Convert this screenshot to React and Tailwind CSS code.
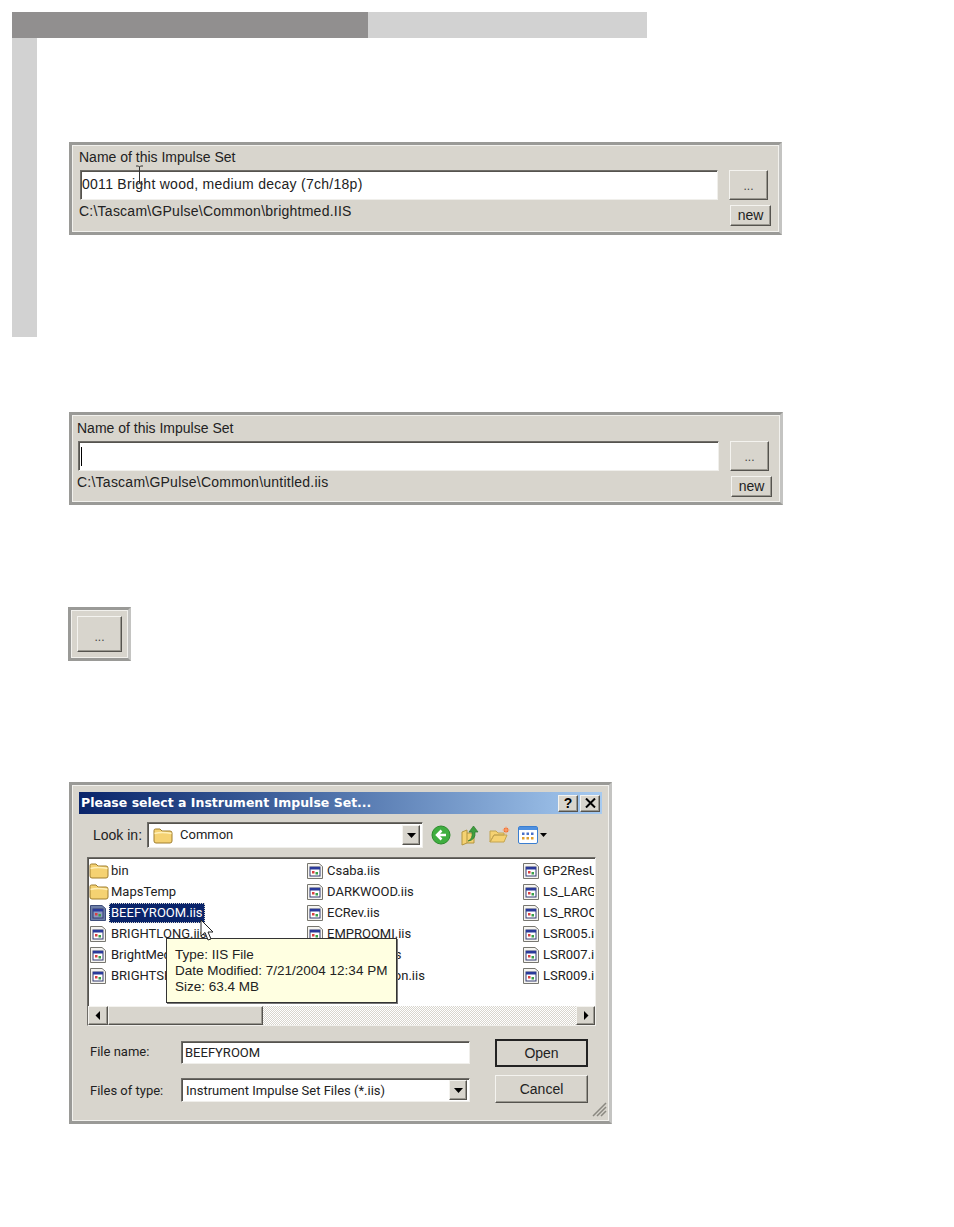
import React from 'react';

const tahoma = "font-['Liberation_Sans',sans-serif]";
const listFont = "font-['Roboto',sans-serif] text-[13px]";
const raised = "border border-t-[#f4f3ef] border-l-[#f4f3ef] border-r-[#55534e] border-b-[#55534e] shadow-[inset_-1px_-1px_0_#9a9890]";
const sunken = "border border-t-[#6f6d68] border-l-[#6f6d68] border-r-[#f0efeb] border-b-[#f0efeb] shadow-[inset_1px_1px_0_#55534e]";

// 3px picture-frame bevel round each captured control
const Frame = ({ className = '', children }) => (
  <div className={`border-[3px] border-t-[#9a9a97] border-l-[#9a9a97] border-r-[#c4c4c2] border-b-[#9a9a97] ${className}`}>
    <div className="border border-[#f2f1ed] bg-[#d8d5cd] h-full">{children}</div>
  </div>
);

const Folder = () => (
  <svg width="20" height="17" viewBox="0 0 20 17" className="shrink-0">
    <path d="M1 3.5 Q1 2 2.5 2 H7 L9 4 H17 Q19 4 19 6 V14 Q19 16 17 16 H3 Q1 16 1 14 Z" fill="#f5d272" stroke="#a07f2e" />
    <path d="M1.5 6.5 Q9 4.5 18.5 6.5" fill="none" stroke="#fff0b8" strokeWidth="1.5" />
  </svg>
);

const FileIcon = ({ selected }) => (
  <svg width="18" height="18" viewBox="0 0 18 18" className="shrink-0">
    <path d="M1.5 1.5 H13 L16.5 4.5 V16.5 H1.5 Z" fill={selected ? '#6d7fa8' : '#f5f4f0'} stroke={selected ? '#3c4c78' : '#77766f'} />
    <rect x="4" y="5" width="10" height="9" fill={selected ? '#8d9ac0' : '#fff'} stroke="#333a70" />
    <rect x="4" y="5" width="10" height="2.5" fill="#2a3a9a" />
    <rect x="6" y="9" width="2.5" height="2.5" fill="#d94040" />
    <rect x="9.5" y="10" width="2.5" height="2.5" fill="#38a048" />
  </svg>
);

const Arrow = ({ dir }) => (
  <svg width="6" height="9" viewBox="0 0 6 9">
    <path d={dir === 'left' ? 'M5 0 V9 L0.5 4.5 Z' : 'M1 0 V9 L5.5 4.5 Z'} fill="#000" />
  </svg>
);

const DownArrow = () => (
  <svg width="9" height="5" viewBox="0 0 9 5"><path d="M0 0 H9 L4.5 5 Z" fill="#000" /></svg>
);

const ImpulsePanel = ({ path, value, caret, header, inputLeft, textLeft, width, cursor }) => (
  <Frame className={`relative ${width} h-[93px]`}>
    <div className={`flex flex-col h-full ${tahoma} text-[14px] text-[#222] leading-none`}>
      <div className={`${header} ${textLeft}`}>Name of this Impulse Set</div>
      <div className={`flex ${inputLeft} pr-[10px]`}>
        <div className={`flex-1 h-[30px] bg-white ${sunken} flex items-center pl-[1px] pb-[3px] tracking-[0.27px] text-[#222]`}>
          {caret && <div className="w-px h-[19px] bg-black ml-[1px] mt-[3px]" />}
          {value}
        </div>
        <div className={`w-[39px] h-[30px] ml-[11px] ${raised} bg-[#d8d5cd] flex items-center justify-center text-[12px] text-[#444] pt-[2px]`}>...</div>
      </div>
      <div className={`flex items-start justify-between ${textLeft} pr-[7px] mt-[5px]`}>
        <span className="-mt-[1px] tracking-[0.24px]">{path}</span>
        <div className={`w-[41px] h-[21px] ${raised} bg-[#d8d5cd] flex items-center justify-center pb-[1px]`}>new</div>
      </div>
    </div>
    {cursor && (
      <svg width="9" height="20" viewBox="0 0 9 20" className="absolute left-[63px] top-[20px]">
        <path d="M1 1 H3.5 L4.5 2 L5.5 1 H8 M4.5 2 V18 M1 19 H3.5 L4.5 18 L5.5 19 H8" fill="none" stroke="#333" />
      </svg>
    )}
  </Frame>
);

const FileRow = ({ name, type, selected, gap }) => (
  <div className="flex items-center h-[21px] whitespace-nowrap">
    {type === 'folder' ? <Folder /> : <FileIcon selected={selected} />}
    <span className={selected
      ? 'ml-[2px] px-[2px] h-[20px] flex items-center bg-[#0a246a] text-white outline-1 outline-dotted outline-[#d8d5cd] -outline-offset-1'
      : type === 'folder' ? 'ml-[2px]' : gap}>{name}</span>
  </div>
);

const columns = [
  { w: 'w-[217px]', gap: 'ml-[4px]', items: [['bin', 'folder'], ['MapsTemp', 'folder'], ['BEEFYROOM.iis', 'file', true], ['BRIGHTLONG.iis', 'file'], ['BrightMedium.iis', 'file'], ['BRIGHTSHORT.iis', 'file']] },
  { w: 'w-[216px]', gap: 'ml-[3px]', items: [['Csaba.iis', 'file'], ['DARKWOOD.iis', 'file'], ['ECRev.iis', 'file'], ['EMPROOMI.iis', 'file'], ['EMPTYR1.iis', 'file'], ['GreatMansion.iis', 'file']] },
  { w: 'w-[72px]', gap: 'ml-[3px]', items: [['GP2ResUser.iis', 'file'], ['LS_LARGE.iis', 'file'], ['LS_RROOM.iis', 'file'], ['LSR005.iis', 'file'], ['LSR007.iis', 'file'], ['LSR009.iis', 'file']] },
];

const Dialog = () => (
  <div className="relative w-[543px] h-[342px] border-[3px] border-t-[#9a9a97] border-l-[#9a9a97] border-r-[#c4c4c2] border-b-[#9a9a97] bg-[#d8d5cd]">
    <div className={`h-full p-[6px] ${tahoma} text-[14px] text-[#222] leading-none border border-[#f2f1ed]`}>
      {/* title bar */}
      <div className="h-[22px] flex items-center justify-between pl-[2px] pr-[2px] bg-gradient-to-r from-[#0a246a] to-[#a6caf0]">
        <span className="font-['DejaVu_Sans',sans-serif] font-bold text-[12.5px] text-white">Please select a Instrument Impulse Set...</span>
        <div className="flex gap-[2px]">
          <div className={`w-[20px] h-[17px] ${raised} bg-[#d8d5cd] flex items-center justify-center text-black font-bold text-[14px]`}>?</div>
          <div className={`w-[20px] h-[17px] ${raised} bg-[#d8d5cd] flex items-center justify-center`}>
            <svg width="11" height="10" viewBox="0 0 11 10"><path d="M1 0.5 L10 9.5 M10 0.5 L1 9.5" stroke="#000" strokeWidth="2" /></svg>
          </div>
        </div>
      </div>
      {/* look in row */}
      <div className="flex items-center h-[26px] mt-[8px] pl-[14px]">
        <span className="w-[54px]">Look in:</span>
        <div className={`w-[276px] h-[26px] bg-white ${sunken} flex items-center pl-[5px] pr-[2px]`}>
          <Folder />
          <span className={`ml-[7px] flex-1 pb-[2px] ${listFont}`}>Common</span>
          <div className={`w-[18px] h-[20px] ${raised} bg-[#d8d5cd] flex items-center justify-center`}><DownArrow /></div>
        </div>
        <svg width="20" height="20" viewBox="0 0 20 20" className="ml-[8px]">
          <circle cx="10" cy="10" r="9" fill="#3fae3f" stroke="#2b8a2b" />
          <path d="M15 10 H7 M10.5 5.5 L6 10 L10.5 14.5" fill="none" stroke="#fff" strokeWidth="2.5" />
        </svg>
        <svg width="20" height="21" viewBox="0 0 20 21" className="ml-[9px]">
          <path d="M2 7 L7 5 V18 L2 20 Z M7 8 H14 V18 H7" fill="#f5d272" stroke="#b3953f" />
          <path d="M8 16 Q13 14 12 7 H9 L13.5 1 L18 7 H15 Q16 15 8 16 Z" fill="#3f9e3f" stroke="#2b7a2b" strokeWidth="0.7" />
        </svg>
        <svg width="22" height="18" viewBox="0 0 22 18" className="ml-[9px]">
          <path d="M1 5 H7 L9 7 H15 V9 H5 L1 16 Z M5 9 H18 L15 16 H1 Z" fill="#f5d272" stroke="#c4a550" />
          <circle cx="17" cy="4" r="2.5" fill="#f26a2a" />
          <path d="M17 0 V8 M13 4 H21" stroke="#f9b58a" strokeWidth="0.8" />
        </svg>
        <svg width="20" height="18" viewBox="0 0 20 18" className="ml-[7px]">
          <rect x="0.5" y="0.5" width="19" height="17" rx="1.5" fill="#fff" stroke="#3a7ed0" />
          <rect x="1" y="1" width="18" height="3" fill="#4e90e0" />
          {[4, 8.5, 13].map((x) => [6.5, 11].map((y) => (
            <rect key={`${x}-${y}`} x={x} y={y} width="2.5" height="2.5" fill={y === 6.5 ? '#4a70c8' : '#e0a030'} />
          )))}
        </svg>
        <svg width="7" height="4" viewBox="0 0 7 4" className="ml-[2px]"><path d="M0 0 H7 L3.5 4 Z" fill="#000" /></svg>
      </div>
      {/* file list */}
      <div className={`relative w-[509px] h-[169px] mt-[9px] ml-[8px] bg-white ${sunken} flex flex-col ${listFont}`}>
        <div className="flex flex-1 pl-[1px] pt-[2px] overflow-hidden">
          {columns.map((col) => (
            <div key={col.w} className={`${col.w} overflow-hidden shrink-0`}>
              {col.items.map(([name, type, selected]) => (
                <FileRow key={name} name={name} type={type} selected={selected} gap={col.gap} />
              ))}
            </div>
          ))}
        </div>
        {/* scrollbar */}
        <div className="flex h-[19px] bg-[repeating-conic-gradient(#d8d5cd_0_25%,#fff_0_50%)] bg-[length:2px_2px]">
          <div className={`w-[20px] ${raised} bg-[#d8d5cd] flex items-center justify-center`}><Arrow dir="left" /></div>
          <div className={`w-[155px] ${raised} bg-[#d8d5cd]`} />
          <div className="flex-1" />
          <div className={`w-[19px] ${raised} bg-[#d8d5cd] flex items-center justify-center`}><Arrow dir="right" /></div>
        </div>
        {/* tooltip */}
        <div className="absolute left-[78px] top-[80px] w-[231px] h-[65px] bg-[#ffffe1] border border-[#333] pl-[8px] pt-[9px] flex flex-col gap-[2px] shadow-[1px_1px_0_#777] font-['Liberation_Sans',sans-serif] text-[13.5px]">
          <div className="h-[14px]">Type: IIS File</div>
          <div className="h-[14px]">Date Modified: 7/21/2004 12:34 PM</div>
          <div className="h-[14px]">Size: 63.4 MB</div>
        </div>
        {/* mouse pointer */}
        <svg width="16" height="23" viewBox="0 0 16 23" className="absolute left-[112px] top-[61px]">
          <path d="M1 1 V17 L5 13.5 L8 21 L11 20 L8 13 H13 Z" fill="#fff" stroke="#222" />
        </svg>
      </div>
      {/* bottom form */}
      <div className="flex mt-[13px] pl-[11px]">
        <div className={`w-[91px] flex flex-col ${listFont}`}>
          <div className="h-[24px] flex items-center">File name:</div>
          <div className="h-[24px] flex items-center mt-[15px]">Files of type:</div>
        </div>
        <div className={`w-[289px] flex flex-col pt-[2px] ${listFont}`}>
          <div className={`h-[23px] bg-white ${sunken} flex items-center pl-[3px]`}>BEEFYROOM</div>
          <div className={`h-[24px] mt-[14px] bg-white ${sunken} flex items-center pl-[4px] pr-[2px]`}>
            <span className="flex-1 pt-[1px]">Instrument Impulse Set Files (*.iis)</span>
            <div className={`w-[18px] h-[20px] ${raised} bg-[#d8d5cd] flex items-center justify-center`}><DownArrow /></div>
          </div>
        </div>
        <div className="ml-[25px] w-[93px] flex flex-col">
          <div className={`h-[28px] ${raised} outline-2 outline-[#222] -outline-offset-2 bg-[#d8d5cd] flex items-center justify-center`}>Open</div>
          <div className={`h-[28px] mt-[8px] ${raised} bg-[#d8d5cd] flex items-center justify-center`}>Cancel</div>
        </div>
      </div>
    </div>
    {/* resize grip */}
    <svg width="16" height="16" viewBox="0 0 16 16" className="absolute right-[2px] bottom-[4px]">
      <path d="M15 2 L2 15 M15 6 L6 15 M15 10 L10 15" stroke="#8a8880" strokeWidth="1.5" />
    </svg>
  </div>
);

const App = () => (
  <div className="w-[954px] h-[1227px] bg-white pt-[12px] pl-[12px] overflow-hidden">
    <div className="flex h-[26px] w-[635px]">
      <div className="w-[356px] bg-[#918f8f]" />
      <div className="flex-1 bg-[#d2d2d2]" />
    </div>
    <div className="flex h-[299px]">
      <div className="w-[25px] bg-[#d2d2d2]" />
      <div className="ml-[32px] mt-[104px]">
        <ImpulsePanel width="w-[713px]" header="h-[24px] pt-[4px]" inputLeft="pl-[7px]" textLeft="pl-[6px]" value="0011 Bright wood, medium decay (7ch/18p)" path="C:\Tascam\GPulse\Common\brightmed.IIS" cursor />
      </div>
    </div>
    <div className="ml-[57px] mt-[75px]">
      <ImpulsePanel width="w-[714px]" header="h-[25px] pt-[5px]" inputLeft="pl-[5px]" textLeft="pl-[4px]" caret path="C:\Tascam\GPulse\Common\untitled.iis" />
    </div>
    <div className="ml-[56px] mt-[102px] w-[63px] h-[54px] border-[3px] border-t-[#9a9a97] border-l-[#9a9a97] border-r-[#c4c4c2] border-b-[#9a9a97] p-[1px] bg-[#f2f1ed]">
      <div className="h-full bg-[#d8d5cd] p-[5px]">
        <div className={`h-full ${raised} bg-[#d8d5cd] flex items-center justify-center ${tahoma} text-[12px] text-[#444] pt-[6px]`}>...</div>
      </div>
    </div>
    <div className="ml-[57px] mt-[121px]">
      <Dialog />
    </div>
  </div>
);

export default App;
